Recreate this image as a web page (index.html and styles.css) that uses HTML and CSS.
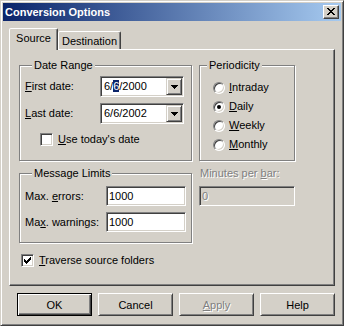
FILE: index.html
```html
<!DOCTYPE html>
<html>
<head>
<meta charset="utf-8">
<title>Conversion Options</title>
<link rel="stylesheet" href="styles.css">
</head>
<body>
<div class="window">
  <div class="titlebar">
    <span class="title">Conversion Options</span>
    <button class="close" aria-label="Close">
      <svg width="14" height="12" viewBox="0 0 14 12"><path d="M3 2h2v1h1v1h2v-1h1v-1h2v1h-1v1h-1v1h-1v1h1v1h1v1h1v1h-2v-1h-1v-1h-2v1h-1v1h-2v-1h1v-1h1v-1h1v-1h-1v-1h-1v-1h-1z" fill="#000"/></svg>
    </button>
  </div>
  <div class="client">
    <div class="tabs">
      <div class="tab active">Source</div>
      <div class="tab dest">Destination</div>
    </div>
    <div class="panel">
      <div class="group date-range">
        <div class="group-title">Date Range</div>
        <div class="field first">
          <label class="lbl"><u>F</u>irst date:</label>
          <div class="combo">
            <span class="combo-text">6/<span class="sel">6</span>/2000</span>
            <span class="drop"><svg width="7" height="4" viewBox="0 0 7 4"><path d="M0 0h7v1H0z M1 1h5v1H1z M2 2h3v1H2z M3 3h1v1H3z" fill="#000"/></svg></span>
          </div>
        </div>
        <div class="field">
          <label class="lbl"><u>L</u>ast date:</label>
          <div class="combo">
            <span class="combo-text">6/6/2002</span>
            <span class="drop"><svg width="7" height="4" viewBox="0 0 7 4"><path d="M0 0h7v1H0z M1 1h5v1H1z M2 2h3v1H2z M3 3h1v1H3z" fill="#000"/></svg></span>
          </div>
        </div>
        <div class="check-row today">
          <span class="checkbox"></span>
          <span><u>U</u>se today's date</span>
        </div>
      </div>

      <div class="group periodicity">
        <div class="group-title">Periodicity</div>
        <div class="radio-list">
          <div class="radio-row"><span class="radio"></span><span><u>I</u>ntraday</span></div>
          <div class="radio-row"><span class="radio on"></span><span><u>D</u>aily</span></div>
          <div class="radio-row"><span class="radio"></span><span><u>W</u>eekly</span></div>
          <div class="radio-row"><span class="radio"></span><span><u>M</u>onthly</span></div>
        </div>
      </div>

      <div class="group limits">
        <div class="group-title">Message Limits</div>
        <div class="field first">
          <label class="lbl">Max. <u>e</u>rrors:</label>
          <div class="textbox">1000</div>
        </div>
        <div class="field">
          <label class="lbl">Ma<u>x</u>. warnings:</label>
          <div class="textbox">1000</div>
        </div>
      </div>

      <div class="minutes">
        <div class="disabled-label">Minutes per <u>b</u>ar:</div>
        <div class="textbox disabled">0</div>
      </div>

      <div class="check-row traverse">
        <span class="checkbox"><svg width="11" height="11" viewBox="0 0 11 11"><path d="M8 2h1v1h-1z M7 3h2v1h-2z M2 4h1v1H2z M6 4h3v1H6z M2 5h2v1H2z M5 5h3v1H5z M2 6h5v1H2z M3 7h3v1H3z M4 8h1v1H4z" fill="#000"/></svg></span>
        <span><u>T</u>raverse source folders</span>
      </div>
    </div>
    <div class="buttons">
      <button class="btn default">OK</button>
      <button class="btn">Cancel</button>
      <button class="btn disabled"><u>A</u>pply</button>
      <button class="btn">Help</button>
    </div>
  </div>
</div>
</body>
</html>
```

FILE: styles.css
```css
html, body {
  margin: 0;
  padding: 0;
  background: #d4d0c8;
}

body {
  font-family: "Liberation Sans", Arial, sans-serif;
  font-size: 11px;
  line-height: 13px;
  color: #000;
}

.window {
  width: 344px;
  height: 326px;
  box-sizing: border-box;
  border: 1px solid;
  border-color: #d4d0c8 #404040 #404040 #d4d0c8;
  box-shadow: inset 1px 1px #fff, inset -1px -1px #808080;
  padding: 2px;
  background: #d4d0c8;
  display: flex;
  flex-direction: column;
}

.titlebar {
  flex: none;
  height: 18px;
  background: linear-gradient(to right, #0a246a, #a6caf0);
  display: flex;
  align-items: center;
  justify-content: space-between;
  padding: 0 2px;
}

.title {
  color: #fff;
  font-weight: bold;
  font-size: 11px;
  line-height: 13px;
}

.close {
  flex: none;
  width: 16px;
  height: 14px;
  box-sizing: border-box;
  padding: 0;
  margin: 0;
  border: 1px solid;
  border-color: #fff #404040 #404040 #fff;
  box-shadow: inset -1px -1px #808080;
  background: #d4d0c8;
  display: block;
}

.close svg {
  display: block;
}

.client {
  flex: 1;
  display: flex;
  flex-direction: column;
  padding: 7px 6px 0 6px;
}

.tabs {
  flex: none;
  height: 21px;
  display: flex;
  align-items: flex-end;
}

.tab {
  flex: none;
  height: 18px;
  box-sizing: border-box;
  border: 1px solid;
  border-bottom: none;
  border-color: #fff #404040 transparent #fff;
  box-shadow: inset -1px 0 #808080;
  border-radius: 2px 2px 0 0;
  background: #d4d0c8;
  display: flex;
  align-items: center;
  justify-content: center;
}

.tab.active {
  width: 49px;
  height: 22px;
  margin-bottom: -1px;
  padding-bottom: 2px;
  position: relative;
  z-index: 1;
}

.tab.dest {
  width: 63px;
  padding-top: 1px;
}

.panel {
  flex: none;
  height: 237px;
  box-sizing: border-box;
  border: 1px solid;
  border-color: #fff #404040 #404040 #fff;
  box-shadow: inset -1px -1px #808080;
  padding: 15px 0 0 9px;
  display: grid;
  grid-template-columns: 173px 96px;
  grid-template-rows: 96px 70px auto;
  column-gap: 7px;
  row-gap: 12px;
  align-content: start;
}

.group {
  box-sizing: border-box;
  border: 1px solid #808080;
  box-shadow: inset 1px 1px #fff, 1px 1px #fff;
}

.group-title {
  display: table;
  height: 13px;
  margin: -7px 0 0 7px;
  padding: 0 2px;
  background: #d4d0c8;
  line-height: 13px;
}

.date-range,
.limits {
  padding-left: 5px;
}

.field {
  display: flex;
  align-items: center;
  height: 21px;
  margin-top: 6px;
}

.field.first {
  margin-top: 4px;
}

.date-range .lbl {
  flex: none;
  width: 75px;
}

.limits .field {
  height: 20px;
}

.limits .field.first {
  margin-top: 6px;
}

.limits .lbl {
  flex: none;
  width: 81px;
}

.combo {
  flex: none;
  width: 84px;
  height: 21px;
  box-sizing: border-box;
  border: 1px solid;
  border-color: #808080 #fff #fff #808080;
  box-shadow: inset 1px 1px #404040, inset -1px -1px #d4d0c8;
  background: #fff;
  padding: 1px;
  display: flex;
  align-items: center;
}

.combo-text {
  flex: 1;
  padding-left: 2px;
}

.sel {
  background: #0a246a;
  color: #fff;
}

.drop {
  flex: none;
  width: 16px;
  height: 17px;
  box-sizing: border-box;
  border: 1px solid;
  border-color: #d4d0c8 #404040 #404040 #d4d0c8;
  box-shadow: inset 1px 1px #fff, inset -1px -1px #808080;
  background: #d4d0c8;
  display: flex;
  align-items: center;
  justify-content: center;
}

.drop svg {
  display: block;
}

.textbox {
  flex: none;
  width: 80px;
  height: 20px;
  box-sizing: border-box;
  border: 1px solid;
  border-color: #808080 #fff #fff #808080;
  box-shadow: inset 1px 1px #404040, inset -1px -1px #d4d0c8;
  background: #fff;
  padding-left: 2px;
  display: flex;
  align-items: center;
}

.textbox.disabled {
  width: 96px;
  margin-top: 6px;
  background: #d4d0c8;
  color: #808080;
  text-shadow: 1px 1px #fff;
}

.check-row {
  display: flex;
  align-items: center;
  gap: 5px;
  height: 13px;
}

.today {
  margin: 9px 0 0 15px;
}

.traverse {
  grid-column: 1 / -1;
  margin: -1px 0 0 2px;
}

.checkbox {
  flex: none;
  width: 13px;
  height: 13px;
  box-sizing: border-box;
  border: 1px solid;
  border-color: #808080 #fff #fff #808080;
  box-shadow: inset 1px 1px #404040, inset -1px -1px #d4d0c8;
  background: #fff;
}

.checkbox svg {
  display: block;
}

.radio-list {
  display: flex;
  flex-direction: column;
  gap: 6px;
  margin: 9px 0 0 13px;
}

.radio-row {
  display: flex;
  align-items: center;
  gap: 4px;
  height: 13px;
}

.radio {
  flex: none;
  width: 12px;
  height: 12px;
  box-sizing: border-box;
  border-radius: 50%;
  border: 1px solid;
  border-color: #808080 #fff #fff #808080;
  box-shadow: inset 1px 1px #404040, inset -1px -1px #d4d0c8;
  background: #fff;
  display: flex;
  align-items: center;
  justify-content: center;
}

.radio.on::after {
  content: "";
  width: 4px;
  height: 4px;
  border-radius: 50%;
  background: #000;
}

.minutes {
  margin-top: -6px;
}

.disabled-label {
  height: 13px;
  padding-left: 1px;
  color: #808080;
  text-shadow: 1px 1px #fff;
}

.buttons {
  flex: none;
  display: flex;
  justify-content: flex-end;
  gap: 6px;
  margin-top: 7px;
}

.btn {
  flex: none;
  width: 75px;
  height: 23px;
  box-sizing: border-box;
  margin: 0;
  padding: 0;
  border: 1px solid;
  border-color: #fff #404040 #404040 #fff;
  box-shadow: inset 1px 1px #d4d0c8, inset -1px -1px #808080;
  background: #d4d0c8;
  font-family: inherit;
  font-size: 11px;
  color: #000;
}

.btn.default {
  border-color: #000;
  box-shadow: inset 1px 1px #fff, inset -1px -1px #404040, inset -2px -2px #808080;
}

.btn.disabled {
  color: #808080;
  text-shadow: 1px 1px #fff;
}
```
